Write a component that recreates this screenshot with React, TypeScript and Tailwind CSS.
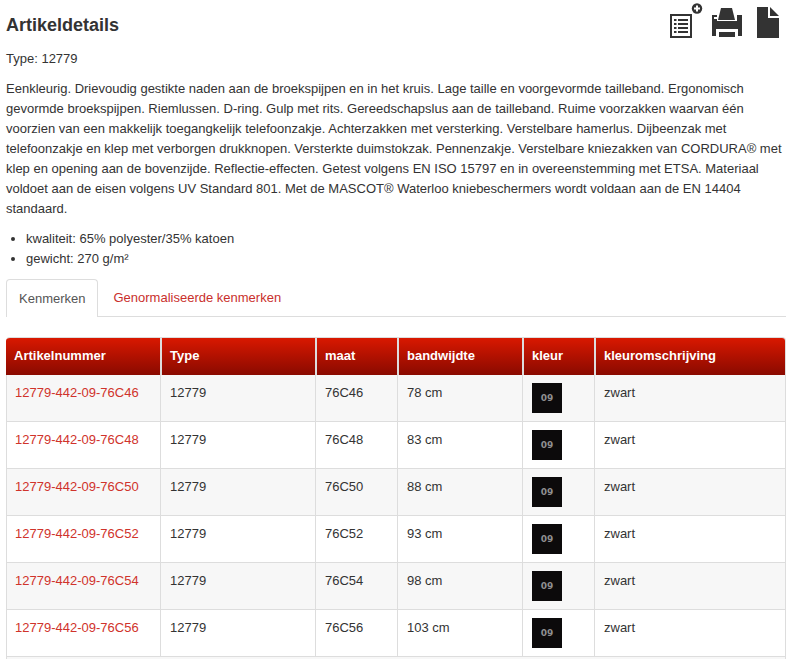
const ROWS = [
  { size: "76C46", width: "78 cm" },
  { size: "76C48", width: "83 cm" },
  { size: "76C50", width: "88 cm" },
  { size: "76C52", width: "93 cm" },
  { size: "76C54", width: "98 cm" },
  { size: "76C56", width: "103 cm" },
];

const HEADERS = [
  { label: "Artikelnummer", width: "w-[154px]" },
  { label: "Type", width: "w-[155px]" },
  { label: "maat", width: "w-[82px]" },
  { label: "bandwijdte", width: "w-[125px]" },
  { label: "kleur", width: "w-[72px]" },
  { label: "kleuromschrijving", width: "" },
];

function ListIcon() {
  return (
    <svg width="34" height="38" viewBox="0 0 34 38" className="fill-[#333]">
      <path fillRule="evenodd" d="M1 13h22v24H1zM3 15v20h18V15z" />
      <path d="M5 18h2.500v2H5zM9 18h10v2H9zM5 22h2.500v2H5zM9 22h10v2H9zM5 26h2.500v2H5zM9 26h10v2H9zM5 30h2.500v2H5zM9 30h10v2H9z" />
      <circle cx="28" cy="7.500" r="5.200" />
      <path d="M27 4.500h2v2h2v2h-2v2h-2v-2h-2v-2h2z" fill="#fff" />
    </svg>
  );
}

function PrintIcon() {
  return (
    <svg width="32" height="32" viewBox="0 0 32 32" className="fill-[#333]">
      <path d="M10 0h11l3 12H7z" />
      <path
        fillRule="evenodd"
        d="M1 7h5v6h20V7h5v21h-4v-7H5v7H1zM3 9v2h3V9z"
      />
      <path d="M8 24h16v5H8z" />
    </svg>
  );
}

function PageIcon() {
  return (
    <svg width="23" height="31" viewBox="0 0 23 31" className="fill-[#333]">
      <path d="M0 0h11v11h11v20H0z" />
      <path d="M13 0l9 9h-9z" />
    </svg>
  );
}

export default function App() {
  return (
    <div className="h-[659px] overflow-hidden bg-white px-[6px] font-['Liberation_Sans',Arial,sans-serif] text-[13px] leading-[20px] text-[#333]">
      <div className="flex h-[42px] items-start justify-between">
        <h1 className="pt-[14px] text-[18px] leading-[22px] font-bold">Artikeldetails</h1>
        <div className="mr-[5px] flex items-start pt-[1px]">
          <ListIcon />
          <div className="ml-[8px] pt-[7px]">
            <PrintIcon />
          </div>
          <div className="ml-[14px] pt-[6px]">
            <PageIcon />
          </div>
        </div>
      </div>

      <p className="mt-[7px]">Type: 12779</p>

      <p className="mt-[10px] w-[779px]">
        Eenkleurig. Drievoudig gestikte naden aan de broekspijpen en in het kruis. Lage taille en voorgevormde
        tailleband. Ergonomisch gevormde broekspijpen. Riemlussen. D-ring. Gulp met rits. Gereedschapslus aan de
        tailleband. Ruime voorzakken waarvan één voorzien van een makkelijk toegangkelijk telefoonzakje.
        Achterzakken met versterking. Verstelbare hamerlus. Dijbeenzak met telefoonzakje en klep met verborgen
        drukknopen. Versterkte duimstokzak. Pennenzakje. Verstelbare kniezakken van CORDURA® met klep en opening
        aan de bovenzijde. Reflectie-effecten. Getest volgens EN ISO 15797 en in overeenstemming met ETSA.
        Materiaal voldoet aan de eisen volgens UV Standard 801. Met de MASCOT® Waterloo kniebeschermers wordt
        voldaan aan de EN 14404 standaard.
      </p>

      <ul className="mt-[10px] list-disc pl-[20px]">
        <li>kwaliteit: 65% polyester/35% katoen</li>
        <li>gewicht: 270 g/m²</li>
      </ul>

      <div className="mt-[10px] flex h-[38px] w-[780px] border-b border-[#ddd]">
        <div className="h-[38px] rounded-t-[4px] border border-b-0 border-[#ddd] bg-white px-[12px] pt-[9px] text-[#555]">
          Kenmerken
        </div>
        <div className="px-[15px] pt-[9px] text-[#c9302c]">Genormaliseerde kenmerken</div>
      </div>

      <table className="mt-[20px] w-[780px] table-fixed border-separate border-spacing-0 overflow-hidden rounded-t-[4px] border-t border-r border-[#ddd]">
        <thead>
          <tr>
            {HEADERS.map((h) => (
              <th
                key={h.label}
                className={`${h.width} h-[37px] border-l-2 border-[#ddd] bg-gradient-to-b from-[#d91800] to-[#8a0a00] px-[8px] pb-[2px] text-left align-middle font-bold text-white first:border-l-0`}
              >
                {h.label}
              </th>
            ))}
          </tr>
        </thead>
        <tbody>
          {ROWS.map((row, i) => (
            <tr key={row.size} className={i % 2 === 0 ? "bg-[#f7f7f7]" : "bg-white"}>
              <td className="h-[47px] border-b border-l border-[#ddd] px-[8px] pt-[8px] align-top text-[#d0332b]">
                12779-442-09-{row.size}
              </td>
              <td className="border-b border-l border-[#ddd] pt-[8px] pl-[9px] align-top">12779</td>
              <td className="border-b border-l border-[#ddd] pt-[8px] pl-[9px] align-top">{row.size}</td>
              <td className="border-b border-l border-[#ddd] pt-[8px] pl-[9px] align-top">{row.width}</td>
              <td className="border-b border-l border-[#ddd] pt-[8px] pl-[9px] align-top">
                <div className="flex h-[30px] w-[30px] items-center justify-center bg-[#0c0a0b] font-['DejaVu_Sans',sans-serif] text-[9px] font-bold text-[#8f8f8f]">
                  09
                </div>
              </td>
              <td className="border-b border-l border-[#ddd] pt-[8px] pl-[9px] align-top">zwart</td>
            </tr>
          ))}
          <tr className="bg-[#f7f7f7]">
            <td colSpan={6} className="h-[47px] border-l border-[#ddd]" />
          </tr>
        </tbody>
      </table>
    </div>
  );
}
